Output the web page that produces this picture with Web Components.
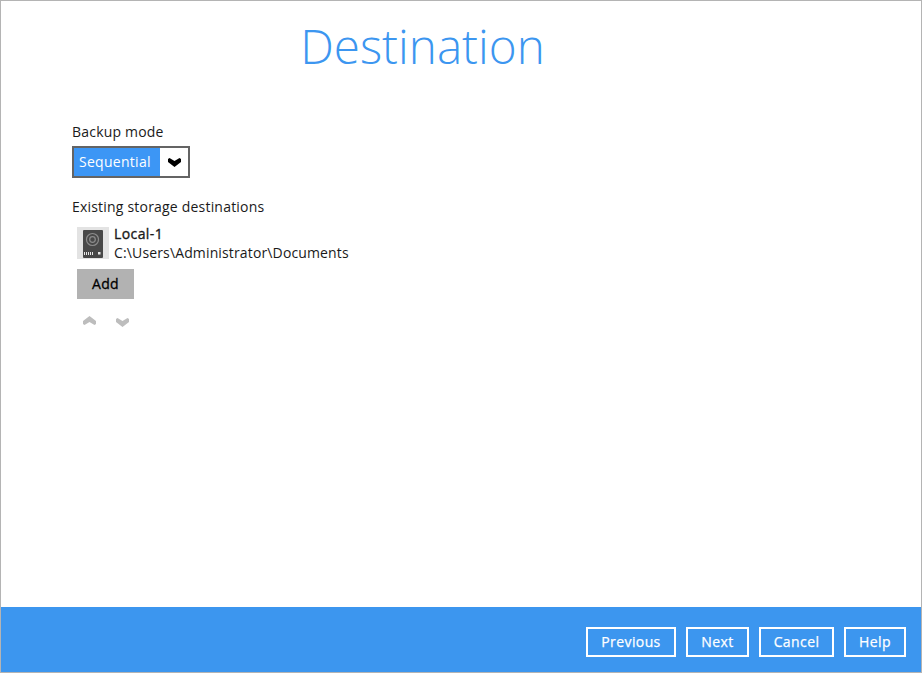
<!DOCTYPE html>
<html>
<head>
<meta charset="utf-8">
<title>Destination</title>
<style>
  html, body { margin: 0; height: 100%; background: #fff; }
  body { font-family: "Open Sans", sans-serif; }
</style>
</head>
<body>
<wizard-page heading="Destination">
  <field-label>Backup mode</field-label>
  <mode-select value="Sequential"></mode-select>
  <field-label class="second">Existing storage destinations</field-label>
  <storage-item name="Local-1" path="C:\Users\Administrator\Documents"></storage-item>
  <add-button>Add</add-button>
  <order-arrows></order-arrows>
  <foot-button slot="footer" size="90">Previous</foot-button>
  <foot-button slot="footer" size="63">Next</foot-button>
  <foot-button slot="footer" size="75">Cancel</foot-button>
  <foot-button slot="footer" size="62">Help</foot-button>
</wizard-page>

<script>
class WizardPage extends HTMLElement {
  constructor() {
    super();
    this.attachShadow({ mode: 'open' });
    this.shadowRoot.innerHTML = `
    <style>
    :host {
      display: flex;
      flex-direction: column;
      box-sizing: border-box;
      width: 922px;
      height: 673px;
      border: 1px solid #b4b4b4;
      color: #1a1a1a;
    }
    h1 {
      margin: 0;
      height: 91px;
      width: 843px;
      text-align: center;
      font: 300 47.6px/90px "Open Sans", sans-serif;
      color: #3c96f0;
    }
    main {
      flex: 1;
      display: flex;
      flex-direction: column;
      align-items: flex-start;
      padding: 30px 0 0 71px;
    }
    footer {
      height: 65px;
      background: #3c96ef;
      display: flex;
      justify-content: flex-end;
      align-items: center;
      gap: 10px;
      padding: 5px 15px 0 0;
      box-sizing: border-box;
    }
    </style>
    <h1></h1>
    <main><slot></slot></main>
    <footer><slot name="footer"></slot></footer>
    `;
  }

  connectedCallback() {
    this.shadowRoot.querySelector('h1').textContent = this.getAttribute('heading');
  }
}

class FieldLabel extends HTMLElement {
  constructor() {
    super();
    this.attachShadow({ mode: 'open' });
    this.shadowRoot.innerHTML = `
    <style>
    :host {
      display: block;
      font: 14px/20px "Open Sans", sans-serif;
      letter-spacing: 0.2px;
      color: #1a1a1a;
    }
    :host(.second) { margin-top: 19px; }
    </style>
    <slot></slot>
    `;
  }
}

class ModeSelect extends HTMLElement {
  constructor() {
    super();
    this.attachShadow({ mode: 'open' });
    this.shadowRoot.innerHTML = `
    <style>
    :host {
      display: flex;
      box-sizing: border-box;
      width: 118px;
      height: 32px;
      margin-top: 4px;
      border: 2px solid #646464;
      background: #fff;
    }
    .value {
      width: 86px;
      background: #3c96f5;
      color: #fff;
      font: 14px/28px "Open Sans", sans-serif;
      letter-spacing: 0.28px;
      padding-left: 5px;
      box-sizing: border-box;
    }
    .arrow {
      flex: 1;
      display: flex;
      align-items: center;
      justify-content: center;
      padding-top: 1px;
    }
    svg { display: block; }
    </style>
    <div class="value"></div>
    <div class="arrow">
      <svg width="13" height="9" viewBox="0 0 13 9">
        <path fill="#000" d="M0 1 L1.5 0 L6.5 3 L11.5 0 L13 1 L13 4 L6.5 9 L0 4 Z"/>
      </svg>
    </div>
    `;
  }

  connectedCallback() {
    this.shadowRoot.querySelector('.value').textContent = this.getAttribute('value');
  }
}

class StorageItem extends HTMLElement {
  constructor() {
    super();
    this.attachShadow({ mode: 'open' });
    this.shadowRoot.innerHTML = `
    <style>
    :host {
      display: flex;
      gap: 5px;
      margin: 7px 0 0 5px;
      font: 14px/19px "Open Sans", sans-serif;
      letter-spacing: 0.14px;
      color: #1a1a1a;
    }
    .icon { width: 32px; height: 32px; margin-top: 3px; }
    .name { letter-spacing: 0.4px; -webkit-text-stroke: 0.35px #1a1a1a; }
    </style>
    <svg class="icon" viewBox="0 0 32 32">
      <rect width="32" height="32" fill="#e3e3e3"/>
      <rect x="6" y="3" width="20" height="28" rx="1" fill="#484848"/>
      <circle cx="15.5" cy="12.5" r="6" fill="none" stroke="#8c8c8c" stroke-width="1.2"/>
      <circle cx="15.5" cy="12.5" r="2.8" fill="none" stroke="#8c8c8c" stroke-width="1.2"/>
      <path stroke="#e8e8e8" stroke-width="1" d="M7.5 25v3M9.5 25v3M11.5 25v3M13.5 25v3M15.5 25v3"/>
      <rect x="21" y="25" width="2.5" height="2.5" fill="#e8e8e8"/>
    </svg>
    <div>
      <div class="name"></div>
      <div class="path"></div>
    </div>
    `;
  }

  connectedCallback() {
    this.shadowRoot.querySelector('.name').textContent = this.getAttribute('name');
    this.shadowRoot.querySelector('.path').textContent = this.getAttribute('path');
  }
}

class AddButton extends HTMLElement {
  constructor() {
    super();
    this.attachShadow({ mode: 'open' });
    this.shadowRoot.innerHTML = `
    <style>
    :host {
      display: block;
      width: 57px;
      height: 30px;
      margin: 7px 0 0 5px;
      background: #b2b2b2;
      color: #000;
      text-align: center;
      font: 400 14px/30px "Open Sans", sans-serif;
      letter-spacing: 0.3px;
      -webkit-text-stroke: 0.3px #000;
    }
    </style>
    <slot></slot>
    `;
  }
}

class OrderArrows extends HTMLElement {
  constructor() {
    super();
    this.attachShadow({ mode: 'open' });
    this.shadowRoot.innerHTML = `
    <style>
    :host {
      display: flex;
      gap: 20px;
      margin: 17px 0 0 11px;
    }
    svg { display: block; }
    .down { margin-top: 2px; }
    </style>
    <svg width="13" height="9" viewBox="0 0 13 9">
      <path fill="#bdbdbd" d="M0 8 L1.5 9 L6.5 6 L11.5 9 L13 8 L13 5 L6.5 0 L0 5 Z"/>
    </svg>
    <svg class="down" width="13" height="9" viewBox="0 0 13 9">
      <path fill="#bdbdbd" d="M0 1 L1.5 0 L6.5 3 L11.5 0 L13 1 L13 4 L6.5 9 L0 4 Z"/>
    </svg>
    `;
  }
}

class FootButton extends HTMLElement {
  constructor() {
    super();
    this.attachShadow({ mode: 'open' });
    this.shadowRoot.innerHTML = `
    <style>
    :host {
      display: block;
      box-sizing: border-box;
      height: 30px;
      border: 2px solid #fff;
      color: #fff;
      text-align: center;
      font: 400 14px/26px "Open Sans", sans-serif;
      letter-spacing: 0.4px;
      -webkit-text-stroke: 0.25px #fff;
    }
    </style>
    <slot></slot>
    `;
  }

  connectedCallback() {
    this.style.width = this.getAttribute('size') + 'px';
  }
}

customElements.define('wizard-page', WizardPage);
customElements.define('field-label', FieldLabel);
customElements.define('mode-select', ModeSelect);
customElements.define('storage-item', StorageItem);
customElements.define('add-button', AddButton);
customElements.define('order-arrows', OrderArrows);
customElements.define('foot-button', FootButton);
</script>
</body>
</html>
